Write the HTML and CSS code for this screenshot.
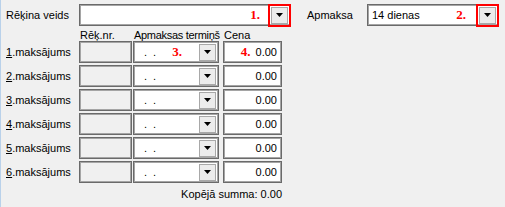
FILE: index.html
```html
<!DOCTYPE html>
<html lang="lv">
<head>
  <meta charset="UTF-8" />
  <title>Rēķina apmaksa</title>
  <link rel="stylesheet" href="styles.css">
</head>
<body>

  <div class="form">

    <div class="top-row">
      <label class="lbl lbl-veids">Rēķina veids</label>
      <div class="combo combo-veids">
        <span class="mark mark-1">1.</span>
        <span class="drop marked"><svg width="7" height="4"><polygon points="0,0 7,0 3.5,4" /></svg></span>
      </div>
      <label class="lbl lbl-apmaksa">Apmaksa</label>
      <div class="combo combo-apmaksa">
        <span class="val">14 dienas</span>
        <span class="mark mark-2">2.</span>
        <span class="drop marked"><svg width="7" height="4"><polygon points="0,0 7,0 3.5,4" /></svg></span>
      </div>
    </div>

    <div class="head-row">
      <span class="h-rek">Rēķ.nr.</span>
      <span class="h-term">Apmaksas termiņš</span>
      <span class="h-cena">Cena</span>
    </div>

    <div id="rows"></div>

    <div class="total">Kopējā summa: 0.00</div>

  </div>

  <script>
    const rows = document.getElementById("rows");
    for (let i = 1; i <= 6; i++) {
      const div = document.createElement("div");
      div.className = "pay-row";
      div.innerHTML = `
        <label class="lbl row-lbl"><u>${i}</u>.maksājums</label>
        <div class="box rek"></div>
        <div class="combo term">
          <span class="dots">. .</span>
          ${i === 1 ? '<span class="mark mark-3">3.</span>' : ''}
          <span class="drop"><svg width="7" height="4"><polygon points="0,0 7,0 3.5,4" /></svg></span>
        </div>
        <div class="box cena">
          ${i === 1 ? '<span class="mark mark-4">4.</span>' : ''}
          <span class="sum">0.00</span>
        </div>
      `;
      rows.appendChild(div);
    }
  </script>

</body>
</html>
```

FILE: styles.css
```css
body {
  margin: 0;
  background-color: #f0f0f0;
  font-family: "Liberation Sans", Arial, sans-serif;
  font-size: 11px;
  color: #000;
  border-left: 1px solid #b9d1ea;
  height: 207px;
  box-sizing: border-box;
  overflow: hidden;
}

.form {
  padding: 4px 0 0 5px;
}

.lbl {
  display: flex;
  align-items: center;
}

.top-row {
  display: flex;
  align-items: center;
  height: 22px;
}

.lbl-veids {
  width: 73px;
}

.lbl-apmaksa {
  width: 60px;
  margin-left: 16px;
}

.combo,
.box {
  height: 22px;
  box-sizing: border-box;
  border: 1px solid #6a6a6a;
  box-shadow: inset 0 0 0 1px #a5a5a5;
  background: #fff;
  display: flex;
  align-items: center;
}

.combo-veids {
  width: 212px;
}

.combo-apmaksa {
  width: 132px;
}

.val {
  padding-left: 4px;
}

.drop {
  width: 17px;
  height: 17px;
  box-sizing: border-box;
  border: 1px solid #a8a8a8;
  background: #ececec;
  display: flex;
  align-items: center;
  justify-content: center;
  margin-left: auto;
  margin-right: 2px;
}

.drop svg {
  fill: #000;
}

.drop.marked {
  outline: 2px solid #f00;
  outline-offset: 1px;
}

.mark {
  font-family: "Liberation Serif", serif;
  font-weight: bold;
  font-size: 13px;
  color: #f00;
  margin-left: auto;
}

.mark + .drop {
  margin-left: 0;
}

.mark-1 {
  margin-right: 11px;
}

.mark-2 {
  margin-right: 13px;
}

.mark-3 {
  margin-right: 17px;
}

.mark-4 {
  margin-right: 5px;
}

.head-row {
  display: flex;
  align-items: flex-end;
  height: 15px;
  padding-left: 74px;
  white-space: nowrap;
}

.h-rek {
  width: 54px;
}

.h-term {
  width: 90px;
  letter-spacing: -0.3px;
}

.pay-row {
  display: flex;
  align-items: center;
  margin-bottom: 2px;
}

.row-lbl {
  width: 73px;
  height: 22px;
}

.rek {
  width: 53px;
  background: #f0f0f0;
  margin-right: 1px;
}

.term {
  width: 86px;
  margin-right: 4px;
}

.dots {
  padding-left: 10px;
  word-spacing: 3px;
}

.cena {
  width: 59px;
}

.sum {
  margin-left: auto;
  padding-right: 4px;
}

.mark-4 + .sum {
  margin-left: 0;
}

.total {
  width: 276px;
  text-align: right;
  padding-top: 3px;
}
```
